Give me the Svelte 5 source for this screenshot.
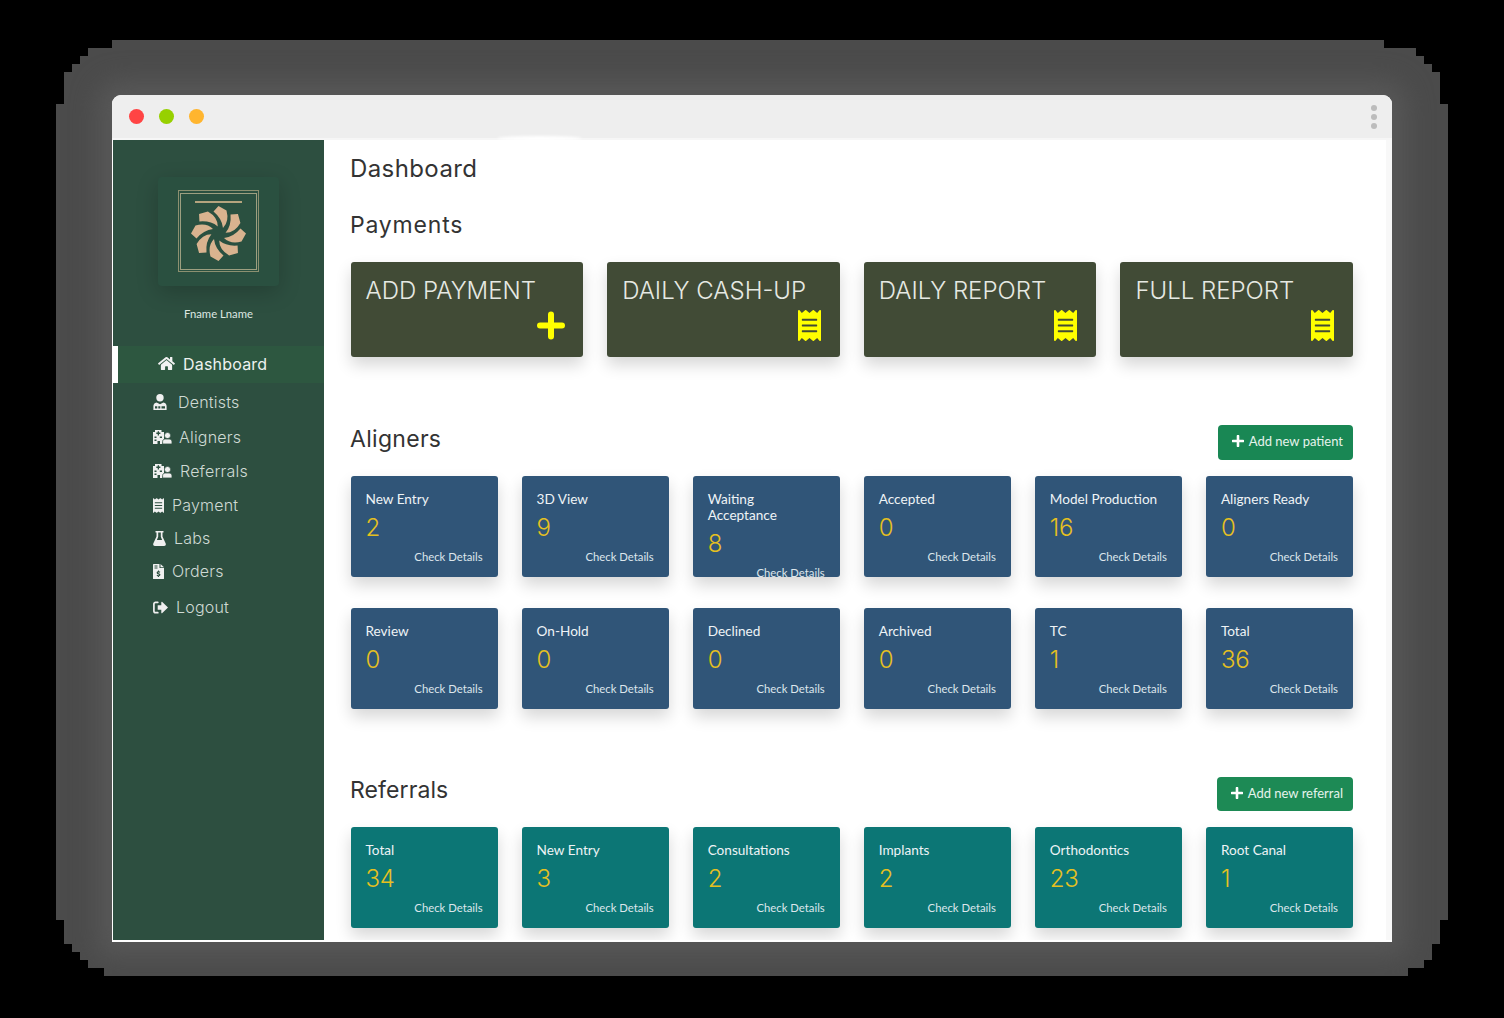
<script>
  const blades = [0, 45, 90, 135, 180, 225, 270, 315];
  const payments = [
    { label: 'ADD PAYMENT', icon: 'plus' },
    { label: 'DAILY CASH-UP', icon: 'receipt' },
    { label: 'DAILY REPORT', icon: 'receipt' },
    { label: 'FULL REPORT', icon: 'receipt' }
  ];
  const aligners = [
    ['New Entry', 2], ['3D View', 9], ['Waiting Acceptance', 8], ['Accepted', 0], ['Model Production', 16], ['Aligners Ready', 0],
    ['Review', 0], ['On-Hold', 0], ['Declined', 0], ['Archived', 0], ['TC', 1], ['Total', 36]
  ];
  const referrals = [
    ['Total', 34], ['New Entry', 3], ['Consultations', 2], ['Implants', 2], ['Orthodontics', 23], ['Root Canal', 1]
  ];
  const nav = [
    { label: 'Dentists', icon: 'doctor', cls: 'n-dentists' },
    { label: 'Aligners', icon: 'hospital', cls: 'n-aligners' },
    { label: 'Referrals', icon: 'hospital', cls: 'n-referrals' },
    { label: 'Payment', icon: 'receipt', cls: 'n-payment' },
    { label: 'Labs', icon: 'flask', cls: 'n-labs' },
    { label: 'Orders', icon: 'invoice', cls: 'n-orders' },
    { label: 'Logout', icon: 'logout', cls: 'n-logout' }
  ];
  const receiptPath = 'M358.4 3.2L320 48 265.6 3.2a15.9 15.9 0 0 0-19.2 0L192 48 137.6 3.2a15.9 15.9 0 0 0-19.2 0L64 48 25.6 3.2C15-4.7 0 2.8 0 16v480c0 13.2 15 20.7 25.6 12.8L64 464l54.4 44.8a15.9 15.9 0 0 0 19.2 0L192 464l54.4 44.8a15.9 15.9 0 0 0 19.2 0L320 464l38.4 44.8c10.5 7.9 25.6.4 25.6-12.8V16c0-13.2-15-20.7-25.6-12.8zM320 360c0 4.4-3.6 8-8 8H72c-4.4 0-8-3.6-8-8v-16c0-4.4 3.6-8 8-8h240c4.4 0 8 3.6 8 8v16zm0-96c0 4.4-3.6 8-8 8H72c-4.4 0-8-3.6-8-8v-16c0-4.4 3.6-8 8-8h240c4.4 0 8 3.6 8 8v16zm0-96c0 4.4-3.6 8-8 8H72c-4.4 0-8-3.6-8-8v-16c0-4.4 3.6-8 8-8h240c4.4 0 8 3.6 8 8v16z';
</script>

{#snippet tile(item, tone)}
  <div class="tile {tone}">
    <div class="tile-title">{item[0]}</div>
    <div class="tile-num">{item[1]}</div>
    <div class="tile-link">Check Details</div>
  </div>
{/snippet}

{#snippet btnPlus()}
  <svg class="btn-plus" viewBox="0 0 12 12" aria-hidden="true"><path d="M6 1v10M1 6h10" stroke="currentColor" stroke-width="2.600" stroke-linecap="round" fill="none" /></svg>
{/snippet}

<div class="frame">
  <div class="window">
    <header class="toolbar">
      <span class="dot red"></span>
      <span class="dot green"></span>
      <span class="dot amber"></span>
      <span class="kebab"><i></i><i></i><i></i></span>
    </header>
    <div class="body">
      <aside class="sidebar">
        <div class="logo">
          <svg viewBox="0 0 121 109" width="121" height="109" aria-hidden="true">
            <rect x="20.5" y="13.5" width="80" height="81" fill="none" stroke="#8c9070" stroke-width="1" />
            <rect x="22.5" y="16.5" width="76" height="76" fill="none" stroke="#9d9f80" stroke-width="1" />
            <rect x="37" y="24" width="47" height="2" fill="#b5a47e" />
            <g transform="translate(60.5 56.5)">
              {#each blades as a}
                <path transform="rotate({a})" d="M-5 -22L0 -27.500L8 -23Q11 -12 4.500 -5.500Q3.500 -15 -5 -22Z" fill="#d9b38f" />
              {/each}
            </g>
          </svg>
        </div>
        <div class="uname">Fname Lname</div>
        <nav class="nav">
          <div class="active">
            <svg class="i-home" viewBox="0 0 576 512" aria-hidden="true"><path fill="currentColor" d="M280.37 148.26L96 300.11V464a16 16 0 0 0 16 16l112.06-.29a16 16 0 0 0 15.92-16V368a16 16 0 0 1 16-16h64a16 16 0 0 1 16 16v95.64a16 16 0 0 0 16 16.05L464 480a16 16 0 0 0 16-16V300L295.67 148.26a12.19 12.19 0 0 0-15.3 0zM571.6 251.47L488 182.56V44.05a12 12 0 0 0-12-12h-56a12 12 0 0 0-12 12v72.61L318.47 43a48 48 0 0 0-61 0L4.34 251.47a12 12 0 0 0-1.6 16.9l25.5 31A12 12 0 0 0 45.15 301l235.22-193.74a12.19 12.19 0 0 1 15.3 0L530.9 301a12 12 0 0 0 16.9-1.6l25.5-31a12 12 0 0 0-1.7-16.93z" /></svg>
            <span>Dashboard</span>
          </div>
          {#each nav as n}
            <div class="item {n.cls}">
              {#if n.icon === 'doctor'}
                <svg class="ic w14" viewBox="0 0 14 16" aria-hidden="true">
                  <circle cx="7" cy="3.700" r="3.700" fill="currentColor" />
                  <path fill="currentColor" fill-rule="evenodd" d="M3.600 8.400C1.400 8.800 0.400 10.400 0.400 12V16H13.600V12C13.600 10.400 12.600 8.800 10.400 8.400L7 10.300ZM2 12.300H4.300V14.500H2ZM5.300 12.300H7.300V14.500H5.300ZM8.500 12.300H12V14.500H8.500Z" />
                </svg>
              {:else if n.icon === 'hospital'}
                <svg class="ic w19" viewBox="0 0 19 14" aria-hidden="true">
                  <path fill="currentColor" fill-rule="evenodd" d="M2 0H8.500V2H11V14H7V11H4.500V14H0V2H2ZM4.700 1.200V2.600H3.300V4H4.700V5.400H6V4H7.400V2.600H6V1.200ZM1.500 6.500V8H3.500V6.500ZM6.800 6.500V8H9V6.500ZM1.500 9.500V11H3.500V9.500Z" />
                  <circle cx="14.500" cy="5.500" r="3" fill="currentColor" stroke="#2d4f40" stroke-width="0.600" />
                  <path fill="currentColor" stroke="#2d4f40" stroke-width="0.800" d="M9.600 14V11.600C9.600 10 10.800 9 12.200 9H16.200C17.800 9 19 10.200 19 11.700V14Z" />
                </svg>
              {:else if n.icon === 'receipt'}
                <svg class="ic w11" viewBox="0 0 384 512" aria-hidden="true"><path fill="currentColor" d={receiptPath} /></svg>
              {:else if n.icon === 'flask'}
                <svg class="ic w13" viewBox="0 0 13 15" aria-hidden="true">
                  <path fill="currentColor" fill-rule="evenodd" d="M2.500 0H10.500V1.600H9.500V5.400L12.700 12.500C13.200 13.800 12.400 15 11.200 15H1.800C0.600 15 -0.200 13.800 0.300 12.500L3.500 5.400V1.600H2.500ZM5.200 1.600V5.800L3.900 8.900H9.100L7.800 5.800V1.600Z" />
                </svg>
              {:else if n.icon === 'invoice'}
                <svg class="ic w11" viewBox="0 0 11 15" aria-hidden="true">
                  <path fill="currentColor" fill-rule="evenodd" d="M0.600 0H6.500V4H11V14.400C11 14.700 10.700 15 10.400 15H0.600C0.300 15 0 14.700 0 14.400V0.600C0 0.300 0.300 0 0.600 0ZM1.500 1.500V2.500H4.500V1.500ZM1.500 3.500V4.500H4.500V3.500ZM5 6.500V7.300C4 7.500 3.600 8.200 3.700 8.900C3.800 9.800 4.600 10.100 5.500 10.400C6.300 10.600 6.300 11.200 5.500 11.200C5 11.200 4.500 11 4.200 10.800L3.600 11.700C4 12 4.500 12.200 5 12.300V13H6V12.300C7 12.100 7.500 11.400 7.400 10.600C7.300 9.800 6.500 9.400 5.700 9.200C4.900 9 4.900 8.400 5.600 8.400C6 8.400 6.400 8.500 6.800 8.700L7.300 7.800C6.900 7.500 6.500 7.400 6 7.300V6.500Z" />
                  <path fill="currentColor" d="M7.500 0L11 3.200H7.500Z" />
                </svg>
              {:else}
                <svg class="ic w15" viewBox="0 0 15 13" aria-hidden="true">
                  <path fill="currentColor" d="M15 6.500L9.300 0.900C8.900 0.500 8.300 0.800 8.300 1.300V4.200H4.700V8.800H8.300V11.700C8.300 12.200 8.900 12.500 9.300 12.100Z" />
                  <path fill="none" stroke="currentColor" stroke-width="1.700" stroke-linecap="round" d="M4.800 1.300H2.600C1.600 1.300 0.900 2 0.900 3V10C0.900 11 1.600 11.700 2.600 11.700H4.800" />
                </svg>
              {/if}
              <span>{n.label}</span>
            </div>
          {/each}
        </nav>
      </aside>

      <main class="main">
        <h1>Dashboard</h1>
        <h2 class="h-pay">Payments</h2>
        <div class="pay-grid">
          {#each payments as p}
            <div class="pay">
              <div class="pay-title">{p.label}</div>
              {#if p.icon === 'plus'}
                <svg class="pay-icon plus" viewBox="0 0 28 31" aria-hidden="true"><path d="M14 4.500V26.500M3 15.500H25" stroke="currentColor" stroke-width="6" stroke-linecap="round" fill="none" /></svg>
              {:else}
                <svg class="pay-icon" viewBox="0 0 384 512" preserveAspectRatio="none" aria-hidden="true"><path fill="currentColor" d={receiptPath} /></svg>
              {/if}
            </div>
          {/each}
        </div>

        <div class="sec-head aligners">
          <h2>Aligners</h2>
          <button class="add patient">{@render btnPlus()}<span>Add new patient</span></button>
        </div>
        <div class="tile-grid">
          {#each aligners as a}
            {@render tile(a, 'blue')}
          {/each}
        </div>

        <div class="sec-head referrals">
          <h2>Referrals</h2>
          <button class="add referral">{@render btnPlus()}<span>Add new referral</span></button>
        </div>
        <div class="tile-grid">
          {#each referrals as r}
            {@render tile(r, 'teal')}
          {/each}
        </div>
      </main>
    </div>
  </div>
</div>

<style>
  :global(body) {
    margin: 0;
    background: #000;
  }
  .frame {
    box-sizing: border-box;
    width: 1392px;
    height: 936px;
    margin: 40px 0 0 56px;
    padding: 55px 0 0 56px;
    background: #4b4b4b;
    overflow: hidden;
    clip-path: polygon(
      56px 0, 1328px 0, 1328px 8px, 1360px 8px, 1360px 16px, 1368px 16px, 1368px 24px, 1376px 24px, 1376px 32px, 1384px 32px, 1384px 64px, 1392px 64px,
      1392px 880px, 1384px 880px, 1384px 904px, 1376px 904px, 1376px 920px, 1368px 920px, 1368px 928px, 1352px 928px, 1352px 936px,
      48px 936px, 48px 928px, 32px 928px, 32px 920px, 24px 920px, 24px 912px, 16px 912px, 16px 904px, 8px 904px, 8px 880px, 0 880px,
      0 64px, 8px 64px, 8px 32px, 16px 32px, 16px 24px, 24px 24px, 24px 16px, 32px 16px, 32px 8px, 56px 8px
    );
  }
  .window {
    width: 1280px;
    height: 847px;
    background: #fff;
    border-radius: 9px 9px 0 0;
    box-shadow: 0 0 26px 14px #585858;
    overflow: hidden;
  }
  .toolbar {
    position: relative;
    box-sizing: border-box;
    height: 45px;
    display: flex;
    align-items: center;
    gap: 15px;
    padding: 0 0 0 17px;
    background: #eeeeee;
    border-bottom: 2px solid #f6f6f6;
  }
  .toolbar::after {
    content: '';
    position: absolute;
    left: 385px;
    bottom: -3px;
    width: 85px;
    height: 5px;
    border-radius: 50%;
    background: #fff;
    filter: blur(1.5px);
  }
  .dot {
    width: 15px;
    height: 15px;
    border-radius: 50%;
  }
  .red { background: #ff4444; }
  .green { background: #97d000; }
  .amber { background: #ffb52e; }
  .kebab {
    margin-left: auto;
    margin-right: 15px;
    display: flex;
    flex-direction: column;
    gap: 3px;
  }
  .kebab i {
    display: block;
    width: 6px;
    height: 6px;
    border-radius: 50%;
    background: #bcbcbc;
  }
  .body {
    display: flex;
    height: 800px;
    padding: 0 0 2px 1px;
  }
  .sidebar {
    flex: 0 0 211px;
    box-sizing: border-box;
    padding-top: 37px;
    background: #2d4f40;
  }
  .logo {
    width: 121px;
    height: 109px;
    margin: 0 auto;
    background: #2a5040;
    border-radius: 4px;
    box-shadow: 0 6px 22px rgba(0, 0, 0, 0.2);
  }
  .logo svg { display: block; }
  .uname {
    margin-top: 20px;
    font: 11.3px/16px Lato, sans-serif;
    color: #dde7e2;
    text-align: center;
  }
  .nav {
    margin-top: 24px;
    font-family: Inter, sans-serif;
    font-size: 16px;
    font-weight: 300;
    color: #cfdad4;
  }
  .active {
    box-sizing: border-box;
    height: 37px;
    display: flex;
    align-items: center;
    gap: 8px;
    padding: 0 0 2px 40px;
    background: #2d5740;
    border-left: 5px solid #fff;
    color: #eef2f0;
    font-weight: 400;
    letter-spacing: 0.2px;
  }
  .i-home {
    width: 17px;
    height: 15px;
    color: #f2f2f2;
  }
  .item {
    height: 34px;
    display: flex;
    align-items: center;
    padding-left: 40px;
    letter-spacing: 0.2px;
  }
  .ic { color: #f0f0f0; flex: none; }
  .w14 { width: 14px; height: 16px; }
  .w19 { width: 19px; height: 14px; }
  .w11 { width: 11px; height: 15px; }
  .w13 { width: 13px; height: 15px; }
  .w15 { width: 15px; height: 13px; }
  .n-dentists { margin-top: 2px; gap: 11px; }
  .n-aligners { margin-top: 1px; gap: 7px; }
  .n-referrals { gap: 8px; }
  .n-payment { gap: 8px; }
  .n-labs { gap: 8px; margin-top: -1px; }
  .n-orders { gap: 8px; margin-top: -1px; }
  .n-logout { gap: 8px; margin-top: 2px; }

  .main {
    flex: 1;
    box-sizing: border-box;
    min-width: 0;
    padding: 14px 33px 0 26px;
    border-right: 6px solid #f8f8f8;
    overflow: hidden;
  }
  h1, h2 {
    margin: 0;
    font-family: Inter, sans-serif;
    font-weight: 400;
    color: #333;
    letter-spacing: 0.3px;
  }
  h1 {
    font-size: 24px;
    line-height: 30px;
    letter-spacing: 0.4px;
  }
  h2 {
    font-size: 23px;
    line-height: 29px;
  }
  .h-pay {
    margin-top: 27px;
    letter-spacing: 0.8px;
  }
  .referrals h2 { letter-spacing: 0.1px; }
  .pay-grid {
    display: grid;
    grid-template-columns: repeat(4, 1fr);
    column-gap: 24px;
    margin: 22px 0 0 0.5px;
  }
  .pay {
    box-sizing: border-box;
    height: 95px;
    display: flex;
    flex-direction: column;
    padding: 15px 19px 16px 15px;
    background: #414b36;
    border-radius: 3px;
    box-shadow: 0 8px 16px rgba(0, 0, 0, 0.16);
  }
  .pay-title {
    font: 300 24px/28px Inter, sans-serif;
    letter-spacing: 0;
    color: #e6e9e3;
  }
  .pay-icon {
    align-self: flex-end;
    width: 23px;
    height: 31px;
    margin-top: 5px;
    color: #ffff00;
  }
  .pay-icon.plus { width: 28px; margin-right: -1px; }
  .sec-head {
    display: flex;
    justify-content: space-between;
    align-items: flex-start;
  }
  .aligners { margin-top: 68px; }
  .referrals { margin-top: 67px; }
  .add {
    display: flex;
    align-items: center;
    gap: 5px;
    height: 35px;
    padding: 0 10px 3px 14px;
    border: 0;
    border-radius: 4px;
    background: #198754;
    color: #e6f3ec;
    font: 13px Lato, sans-serif;
  }
  .referral {
    height: 34px;
    margin-top: 1px;
    background: #1d8a55;
  }
  .btn-plus {
    width: 12px;
    height: 12px;
    color: #fff;
  }
  .tile-grid {
    display: grid;
    grid-template-columns: repeat(6, 1fr);
    column-gap: 24px;
    row-gap: 31px;
    margin: 16px 0 0 0.5px;
  }
  .tile {
    box-sizing: border-box;
    height: 101px;
    padding: 15px 15px 0;
    border-radius: 3px;
    overflow: hidden;
    box-shadow: 0 8px 16px rgba(0, 0, 0, 0.16);
    color: #eef3f6;
  }
  .blue { background: #305578; }
  .teal { background: #0c7675; }
  .tile-title {
    font: 13.6px/16px Lato, sans-serif;
  }
  .tile-num {
    margin-top: 7px;
    font: 300 24px/28px Inter, sans-serif;
    letter-spacing: -0.3px;
    color: #e6c01f;
  }
  .tile-link {
    margin-top: 8px;
    font: 11.3px/14px Lato, sans-serif;
    text-align: right;
    color: #dde6ec;
  }
</style>
